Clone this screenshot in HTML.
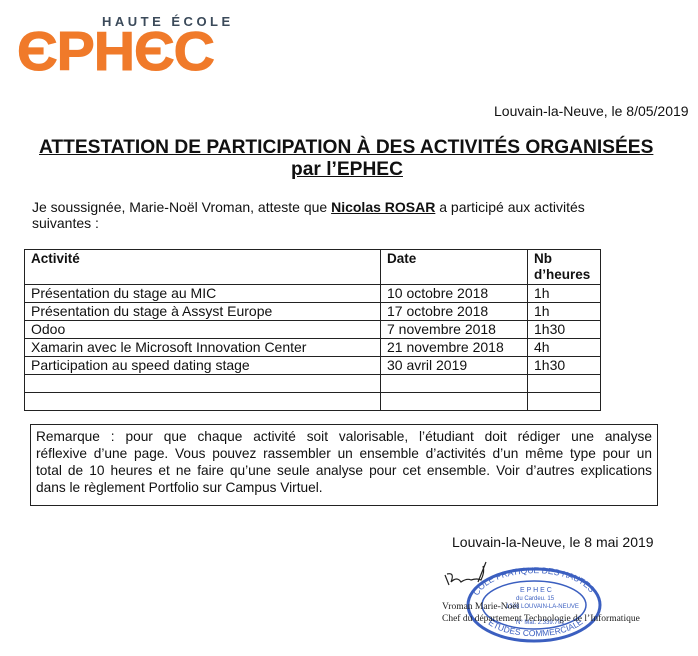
<!DOCTYPE html>
<html><head><meta charset="utf-8"><style>
body{margin:0;width:698px;height:656px;background:#fff;font-family:"Liberation Sans",Arial,sans-serif;color:#111;position:relative;overflow:hidden}
.a{position:absolute;white-space:nowrap}
table{position:absolute;left:24px;top:249px;border-collapse:collapse;font-size:14px}
td{border:1px solid #222;padding:0 6px;height:17px;line-height:17px;vertical-align:top}
th{border:1px solid #222;padding:1px 6px;text-align:left;vertical-align:top;font-size:13.5px;line-height:16px;height:31px}
.j{text-align:justify;text-align-last:justify;white-space:nowrap;height:17px}
</style></head><body>
<div class="a" style="left:102px;top:14px;font-size:13px;font-weight:bold;letter-spacing:3.5px;color:#3b4a5a">HAUTE ÉCOLE</div>
<div class="a" style="left:17px;top:19px;font-size:55px;font-weight:900;color:#f07a2a;letter-spacing:-1px;transform:scaleX(1.04);transform-origin:left;-webkit-text-stroke:1px #f07a2a">ЄPHЄC</div>
<div class="a" style="left:494px;top:103px;font-size:14px">Louvain-la-Neuve, le 8/05/2019</div>
<div class="a" style="left:39px;top:137px;font-size:19.2px;font-weight:bold;text-decoration:underline">ATTESTATION DE PARTICIPATION À DES ACTIVITÉS ORGANISÉES</div>
<div class="a" style="left:291px;top:159px;font-size:19.2px;font-weight:bold;text-decoration:underline">par l’EPHEC</div>
<div class="a" style="left:32px;top:199px;font-size:14px;line-height:16px">Je soussignée, Marie-Noël Vroman, atteste que <b><u>Nicolas ROSAR</u></b> a participé aux activités<br>suivantes :</div>
<table>
<tr><th style="width:343px">Activité</th><th style="width:134px">Date</th><th style="width:60px">Nb<br>d’heures</th></tr>
<tr><td>Présentation du stage au MIC</td><td>10 octobre 2018</td><td>1h</td></tr>
<tr><td>Présentation du stage à Assyst Europe</td><td>17 octobre 2018</td><td>1h</td></tr>
<tr><td>Odoo</td><td>7 novembre 2018</td><td>1h30</td></tr>
<tr><td>Xamarin avec le Microsoft Innovation Center</td><td>21 novembre 2018</td><td>4h</td></tr>
<tr><td>Participation au speed dating stage</td><td>30 avril 2019</td><td>1h30</td></tr>
<tr><td></td><td></td><td></td></tr>
<tr><td></td><td></td><td></td></tr>
</table>
<div class="a" style="left:30px;top:424px;width:616px;height:74px;border:1px solid #222;padding:3px 5px;font-size:13.7px;line-height:17px;white-space:normal">
<div class="j">Remarque : pour que chaque activité soit valorisable, l’étudiant doit rédiger une analyse</div>
<div class="j">réflexive d’une page. Vous pouvez rassembler un ensemble d’activités d’un même type pour un</div>
<div class="j">total de 10 heures et ne faire qu’une seule analyse pour cet ensemble. Voir d’autres explications</div>
<div style="white-space:nowrap">dans le règlement Portfolio sur Campus Virtuel.</div>
</div>
<div class="a" style="left:452px;top:534px;font-size:14px">Louvain-la-Neuve, le 8 mai 2019</div>
<svg class="a" style="left:420px;top:560px" width="278" height="96">
<ellipse cx="114" cy="45" rx="66" ry="36" fill="none" stroke="#3b5fc0" stroke-width="3"/>
<ellipse cx="114" cy="45" rx="52" ry="24" fill="none" stroke="#3b5fc0" stroke-width="1.5"/>
<path id="t1" d="M58 36 A58 28 0 0 1 172 36" fill="none"/>
<path id="t2" d="M68 64 A54 24 0 0 0 162 64" fill="none"/>
<text font-size="8.5" fill="#3b5fc0" font-family="Liberation Sans"><textPath href="#t1">COLE PRATIQUE DES HAUTES</textPath></text>
<text font-size="8.5" fill="#3b5fc0" font-family="Liberation Sans"><textPath href="#t2">ETUDES COMMERCIALES</textPath></text>
<text x="100" y="32" font-size="7" fill="#3b5fc0" font-family="Liberation Sans">E P H E C</text>
<text x="96" y="40" font-size="6" fill="#3b5fc0" font-family="Liberation Sans">du Cardeu. 15</text>
<text x="86" y="48" font-size="6" fill="#3b5fc0" font-family="Liberation Sans">1348 LOUVAIN-LA-NEUVE</text>
<text x="96" y="64" font-size="6" fill="#3b5fc0" font-family="Liberation Sans">N° Mat. 2.339.701</text>
<path d="M25 15 l4 10 M27 14 q8 -2 4 8 q6 -6 10 0 q6 -4 10 -2 q6 -2 10 0 q4 -8 2 -14 M58 22 l8 -20" fill="none" stroke="#222" stroke-width="1.2"/>
<text x="22" y="49" font-size="9.5" fill="#222" font-family="Liberation Serif">Vroman Marie-Noël</text>
<text x="22" y="61" font-size="9.5" fill="#222" font-family="Liberation Serif">Chef du département Technologie de l’Informatique</text>
</svg>
</body></html>
